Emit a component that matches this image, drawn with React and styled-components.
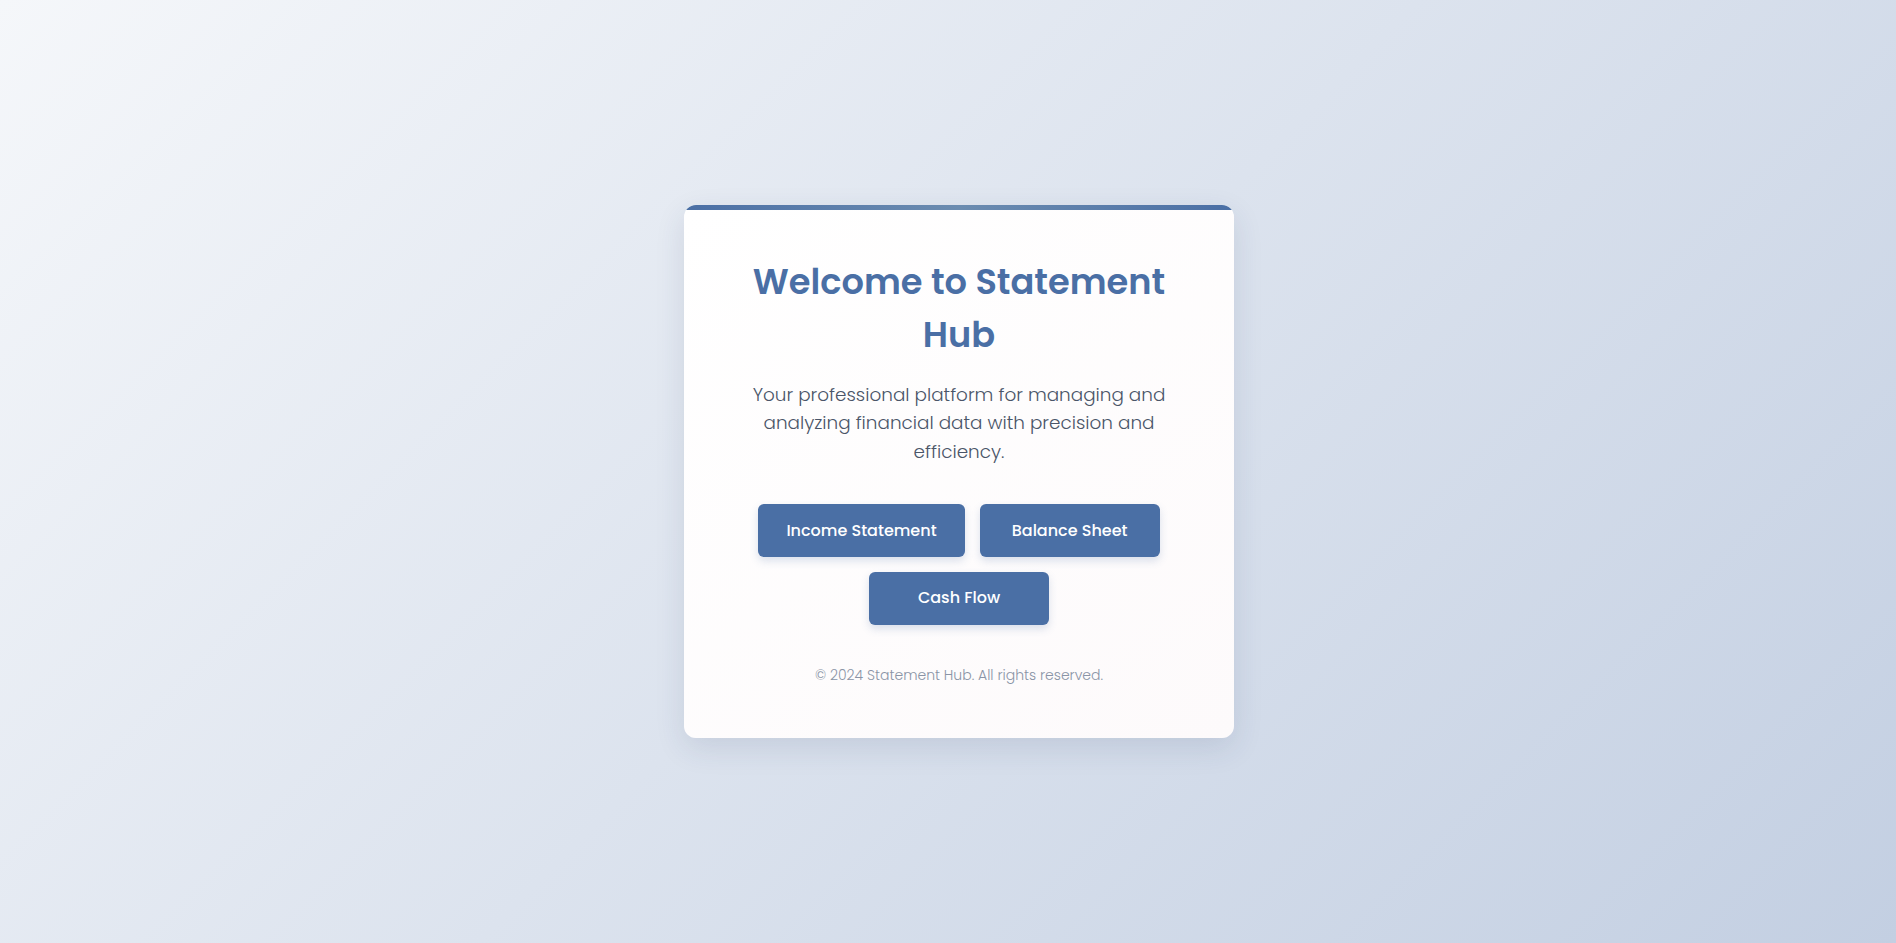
import styled, { createGlobalStyle } from 'styled-components';

const GlobalStyle = createGlobalStyle`
  * {
    box-sizing: border-box;
    margin: 0;
    padding: 0;
  }

  body {
    font-family: 'Poppins', 'Inter', 'Noto Sans', sans-serif;
    background: linear-gradient(135deg, #f5f7fa 0%, #c3cfe2 100%);
    min-height: 100vh;
    color: #4a5568;
  }
`;

const App = () => {
  return (
    <>
      <GlobalStyle />
      <Page>
        <Card>
          <Title>Welcome to Statement Hub</Title>
          <Intro>
            Your professional platform for managing and analyzing financial data with precision and
            efficiency.
          </Intro>
          <Actions>
            <Button>Income Statement</Button>
            <Button>Balance Sheet</Button>
            <Button>Cash Flow</Button>
          </Actions>
          <Footer>© 2024 Statement Hub. All rights reserved.</Footer>
        </Card>
      </Page>
    </>
  );
};

const Page = styled.main`
  min-height: 100vh;
  display: flex;
  align-items: center;
  justify-content: center;
  padding-left: 22px;
`;

const Card = styled.div`
  position: relative;
  width: 550px;
  padding: 51px 50px 52px;
  border-radius: 12px;
  overflow: hidden;
  text-align: center;
  background: linear-gradient(145deg, #ffffff 0%, #fdfafb 100%);
  box-shadow: 0 10px 30px rgba(40, 60, 100, 0.12);

  &::before {
    content: '';
    position: absolute;
    top: 0;
    left: 0;
    right: 0;
    height: 5px;
    background: linear-gradient(90deg, #4a6fa5, #6b8cb0, #4a6fa5);
  }
`;

const Title = styled.h1`
  color: #4a6fa5;
  font-size: 35.2px;
  font-weight: 600;
  line-height: 1.5;
  margin-bottom: 19px;
`;

const Intro = styled.p`
  font-size: 18.4px;
  font-weight: 300;
  line-height: 1.55;
  color: #4a5568;
  margin-bottom: 38px;
`;

const Actions = styled.div`
  display: flex;
  flex-wrap: wrap;
  justify-content: center;
  gap: 15px;
  margin-bottom: 40px;
`;

const Button = styled.button`
  min-width: 180px;
  padding: 14.4px 28px;
  border: none;
  border-radius: 6px;
  background: #4a6fa5;
  color: #ffffff;
  font-family: inherit;
  font-size: 16px;
  font-weight: 500;
  line-height: 1.5;
  cursor: pointer;
  box-shadow: 0 4px 8px rgba(74, 111, 165, 0.2);
`;

const Footer = styled.p`
  font-size: 14px;
  font-weight: 300;
  color: #8a94a6;
  line-height: 1.5;
`;

export default App;
